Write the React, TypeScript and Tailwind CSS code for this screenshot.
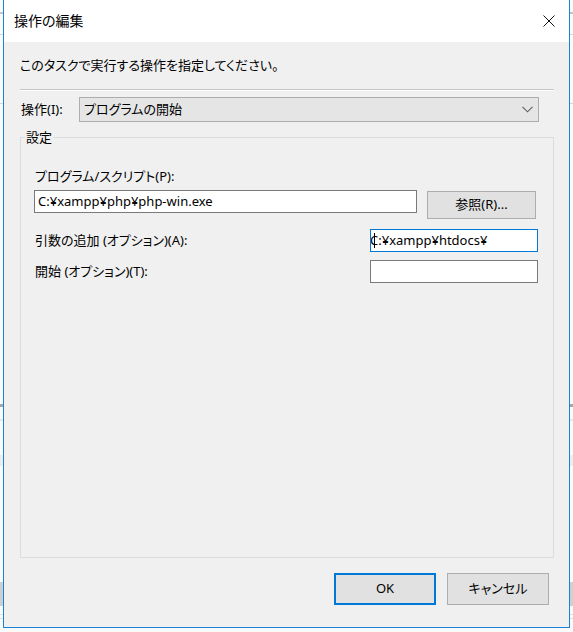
import React from "react";

const font =
  "[font-family:'Noto_Sans','Noto_Sans_CJK_JP',sans-serif] [font-feature-settings:'palt']";

function TextBox({
  value,
  focused,
  className,
}: {
  value?: React.ReactNode;
  focused?: boolean;
  className?: string;
}) {
  return (
    <div
      className={`flex h-[23px] items-center overflow-hidden border bg-white pl-[3px] text-[13px] whitespace-nowrap ${
        focused ? "border-[#0078d7]" : "border-[#7a7a7a]"
      } ${className ?? ""}`}
    >
      {value}
    </div>
  );
}

function Chevron() {
  return (
    <svg width="11" height="7" viewBox="0 0 11 7" fill="none">
      <path d="M0.5 0.8 L5.5 5.8 L10.5 0.8" stroke="#606060" strokeWidth="1.1" />
    </svg>
  );
}

function CloseIcon() {
  return (
    <svg width="12" height="12" viewBox="0 0 12 12" fill="none">
      <path d="M0.5 0.5 L11.5 11.5 M11.5 0.5 L0.5 11.5" stroke="#111" strokeWidth="1" />
    </svg>
  );
}

export default function App() {
  return (
    <div className={`relative h-[632px] w-[573px] overflow-hidden bg-[#fafafa] text-black ${font}`}>
      {/* window behind the dialog */}
      <div className="flex flex-col">
        <div className="mt-[12px] h-[2px] bg-[#c4c4c4]" />
        <div className="mt-[20px] h-[1px] bg-[#d8d8d8]" />
        <div className="mt-[68px] h-[1px] bg-[#d8d8d8]" />
        <div className="mt-[300px] h-[3px] bg-[#a6a6a6]" />
        <div className="mt-[12px] h-[2px] bg-[#e6e6e6]" />
        <div className="mt-[34px] h-[11px] bg-[#ececec]" />
        <div className="mt-[116px] h-[24px] bg-[#cfcfcf]" />
        <div className="mt-[8px] h-[1px] bg-[#dedede]" />
        <div className="mt-[3px] h-[1px] bg-[#dedede]" />
      </div>

      {/* dialog window */}
      <div className="absolute top-0 left-[3px] flex h-[628px] w-[567px] flex-col border-x border-b border-[#1883d7] bg-[#f0f0f0]">
        <div className="flex h-[42px] shrink-0 items-center justify-between bg-white pr-[14px] pl-[10px]">
          <span className="text-[14px] leading-none">操作の編集</span>
          <CloseIcon />
        </div>

        <div className="flex flex-1 flex-col pt-[13px] pr-[15px] pb-[22px] pl-[16px]">
          <p className="text-[13px] leading-[20px]">このタスクで実行する操作を指定してください。</p>
          <div className="mt-[14px] h-[2px] border-t border-b border-t-[#c6c6c6] border-b-white" />

          <div className="mt-[6px] flex items-center">
            <span className="w-[59px] pl-[1px] text-[13px]">操作(I):</span>
            <div className="flex h-[25px] w-[460px] items-center justify-between border border-[#adadad] bg-[#e5e5e5] pr-[5px] pl-[4px] text-[13px]">
              <span>プログラムの開始</span>
              <Chevron />
            </div>
          </div>

          <div className="relative mt-[15px] flex h-[421px] w-[534px] flex-col border border-[#dcdcdc] pr-[15px] pl-[13px]">
            <span className="absolute -top-[10px] left-[4px] bg-[#f0f0f0] px-[1px] text-[13px] leading-[18px]">
              設定
            </span>

            <span className="mt-[30px] pl-[1px] text-[13px] leading-[16px]">プログラム/スクリプト(P):</span>
            <div className="mt-[6px] flex items-start gap-[10px]">
              <TextBox className="h-[22px] w-[383px]" value="C:¥xampp¥php¥php-win.exe" />
              <button className="mt-[1px] h-[28px] w-[109px] border border-[#adadad] bg-[#e1e1e1] text-[13px]">
                参照(R)...
              </button>
            </div>

            <div className="mt-[10px] flex items-center justify-between">
              <span className="pl-[1px] text-[13px]">引数の追加 (オプション)(A):</span>
              <TextBox
                focused
                className="w-[168px] pl-[1px]"
                value={
                  <>
                    <span className="mr-[-1px] h-[15px] w-[1px] bg-black" />
                    <span className="-ml-[4px]">C:¥xampp¥htdocs¥</span>
                  </>
                }
              />
            </div>

            <div className="mt-[8px] flex items-center justify-between">
              <span className="pl-[1px] text-[13px]">開始 (オプション)(T):</span>
              <TextBox className="w-[168px]" />
            </div>
          </div>

          <div className="mt-[15px] flex justify-end gap-[11px] pr-[5px]">
            <button className="h-[32px] w-[102px] border-2 border-[#0078d7] bg-[#e1e1e1] text-[13px]">OK</button>
            <button className="h-[32px] w-[102px] border border-[#adadad] bg-[#e1e1e1] text-[13px]">キャンセル</button>
          </div>
        </div>
      </div>
    </div>
  );
}
